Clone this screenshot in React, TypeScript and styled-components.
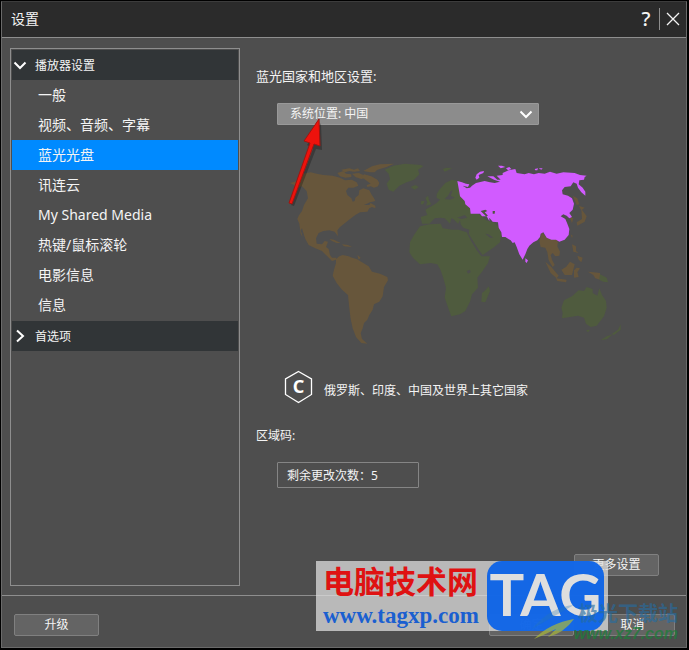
import React, { useState } from "react";
import styled, { createGlobalStyle } from "styled-components";

const GlobalStyle = createGlobalStyle`
  * { box-sizing: border-box; }
  body {
    margin: 0;
    background: #000;
    color: #f4f4f4;
    font-family: "Noto Sans", "Noto Sans CJK SC", sans-serif;
    font-size: 12px;
  }
  button, select { font: inherit; color: inherit; }
`;

const Frame = styled.div`
  min-height: 100vh;
  padding: 1px 2px 2px 1px;
  display: flex;
  background: #000;
`;

const Dialog = styled.div`
  position: relative;
  flex: 1;
  min-width: 0;
  display: flex;
  flex-direction: column;
  border: 1px solid #6a6a6a;
  border-top-color: #3c3c3c;
  background: #4e4e4e;
`;

const TitleBar = styled.header`
  display: flex;
  align-items: center;
  height: 36px;
  padding: 0 0 2px 9px;
  background: #2b2b2b;
  border-bottom: 1px solid #8e8e8e;
`;

const Title = styled.h1`
  flex: 1;
  margin: 0;
  font-size: 14px;
  font-weight: 400;
  line-height: 20px;
`;

const TitleButton = styled.button`
  display: flex;
  align-items: center;
  justify-content: center;
  width: 26px;
  height: 22px;
  padding: 0;
  border: 0;
  background: none;
  font-size: 20px;
  font-weight: 500;
  line-height: 22px;
`;

const TitleDivider = styled.span`
  width: 1px;
  height: 22px;
  background: #8e8e8e;
`;

const Main = styled.main`
  flex: 1;
  display: flex;
  padding: 10px 27px 9px 8px;
  gap: 16px;
`;

const Sidebar = styled.nav`
  flex: 0 0 230px;
  padding: 1px;
  border: 1px solid #8e8e8e;
`;

const GroupButton = styled.button`
  display: flex;
  align-items: center;
  gap: 8px;
  width: 100%;
  height: 30px;
  padding: 0 0 0 1px;
  border: 0;
  background: #313537;
  text-align: left;
`;

const ItemButton = styled.button<{ $active: boolean }>`
  display: block;
  width: 100%;
  height: 30px;
  padding: 0 26px;
  border: 0;
  background: ${(p) => (p.$active ? "#008aff" : "transparent")};
  font-size: 14px;
  line-height: 30px;
  text-align: left;
`;

const Items = styled.div`
  padding-bottom: 1px;
`;

const Content = styled.section`
  flex: 1;
  min-width: 0;
  display: flex;
  flex-direction: column;
`;

const Heading = styled.label`
  display: block;
  padding-top: 18px;
  font-size: 13px;
  line-height: 20px;
`;

const Indent = styled.div`
  padding-left: 21px;
`;

const SelectWrap = styled.div`
  position: relative;
  width: 262px;
  margin-top: 17px;
`;

const RegionSelect = styled.select`
  display: block;
  appearance: none;
  width: 100%;
  height: 22px;
  padding: 0 30px 0 12px;
  border: 1px solid #999;
  border-radius: 1px;
  background: #8c8c8c;
  line-height: 20px;
`;

const SelectArrow = styled.span`
  position: absolute;
  right: 6px;
  top: 4px;
  display: flex;
  pointer-events: none;
`;

const MapSvg = styled.svg`
  display: block;
  width: 350px;
  height: 200px;
  margin: 30px 0 0 34px;
`;

const Legend = styled.div`
  display: flex;
  align-items: center;
  gap: 11px;
  margin: 15px 0 0 28px;
`;

const Hexagon = styled.svg`
  flex: none;
  width: 29px;
  height: 34px;
`;

const LegendText = styled.span`
  padding-top: 8px;
  line-height: 20px;
  white-space: nowrap;
`;

const CodeHeading = styled.h2`
  margin: 22px 0 0;
  font-size: 12px;
  font-weight: 400;
  line-height: 20px;
`;

const Remaining = styled.output`
  display: block;
  width: 142px;
  height: 26px;
  margin-top: 16px;
  padding: 0 9px;
  border: 1px solid #858585;
  border-radius: 1px;
  line-height: 26px;
`;

const Actions = styled.div`
  display: flex;
  justify-content: flex-end;
  margin-top: auto;
  padding-bottom: 10px;
`;

const PushButton = styled.button`
  width: 85px;
  height: 22px;
  padding: 0;
  border: 1px solid #808080;
  border-radius: 2px;
  background: #646464;
  line-height: 20px;
`;

const Footer = styled.footer`
  display: flex;
  gap: 16px;
  padding: 18px 11px 11px 12px;
  border-top: 1px solid #8e8e8e;
`;

const Spacer = styled.span`
  flex: 1;
`;

const Arrow = styled.svg`
  position: absolute;
  left: 278px;
  top: 110px;
  width: 50px;
  height: 100px;
  pointer-events: none;
`;

const SiteMark = styled.div`
  position: absolute;
  right: 78px;
  bottom: 16px;
  display: flex;
  width: 292px;
  height: 70px;
  background: rgba(222, 222, 222, 0.74);
  pointer-events: none;
`;

const SiteText = styled.div`
  width: 171px;
  padding-left: 7px;
  white-space: nowrap;
`;

const SiteName = styled.div`
  height: 40px;
  color: #df1212;
  font: 700 31px/38px "Noto Sans CJK SC", sans-serif;
`;

const SiteUrl = styled.div`
  color: #1a5fd0;
  font: 700 23px/30px "Liberation Serif", serif;
`;

const Tag = styled.div`
  width: 117px;
  height: 70px;
  border-radius: 15px;
  background: rgba(8, 97, 232, 0.93);
  color: #dedede;
  font: 700 58px/66px Lato, "Open Sans", sans-serif;
  text-align: center;
`;

const DownloadMark = styled.div`
  position: absolute;
  right: 8px;
  bottom: 4px;
  display: flex;
  align-items: flex-end;
  pointer-events: none;
`;

const Swoosh = styled.svg`
  width: 48px;
  height: 40px;
`;

const DownloadText = styled.div`
  width: 104px;
  display: flex;
  flex-direction: column;
  align-items: flex-end;
  white-space: nowrap;
`;

const DownloadName = styled.div`
  color: rgba(38, 108, 160, 0.65);
  font: 700 20px/24px "Noto Sans CJK SC", sans-serif;
`;

const DownloadUrl = styled.div`
  color: rgba(30, 125, 58, 0.75);
  font: italic 700 16px/18px "Liberation Sans", sans-serif;
`;

const Chevron = ({ right = false }: { right?: boolean }) => (
  <svg width="14" height="14" viewBox="0 0 14 14" fill="none" stroke="#fff" strokeWidth="2" aria-hidden="true">
    <path d={right ? "M4 1.5 L10 7 L4 12.5" : "M1.5 4.5 L7 10 L12.5 4.5"} />
  </svg>
);

const ITEMS = ["一般", "视频、音频、字幕", "蓝光光盘", "讯连云", "My Shared Media", "热键/鼠标滚轮", "电影信息", "信息"];

const AMERICAS = [
  "M0 84 L22 78 L38 58 L50 54 L62 52 L80 56 L100 60 L128 62 L150 68 L165 76 L185 74 L200 82 L205 92 L190 98 L175 98 L168 108 L172 120 L184 130 L188 140 L194 138 L196 128 L206 120 L208 106 L220 100 L238 106 L244 118 L252 130 L256 138 L240 142 L222 150 L238 150 L242 144 L256 152 L256 160 L246 156 L238 160 L232 170 L210 172 L196 180 L180 192 L165 204 L150 216 L142 226 L144 244 L134 230 L118 226 L100 228 L86 234 L78 250 L80 266 L96 268 L104 258 L114 260 L108 276 L116 282 L120 300 L126 308 L138 308 L138 314 L126 318 L112 304 L96 288 L76 280 L56 270 L46 252 L42 240 L36 220 L32 226 L38 246 L32 236 L28 206 L22 192 L26 182 L36 168 L42 150 L54 130 L50 108 L36 94 L20 98 L12 90 Z",
  "M142 54 L160 48 L168 56 L184 58 L184 66 L166 68 L150 64 Z",
  "M154 44 L178 40 L192 44 L204 40 L210 48 L192 50 L178 48 L164 52 Z",
  "M186 56 L206 54 L220 60 L226 68 L214 72 L196 66 Z",
  "M222 58 L244 64 L262 74 L268 84 L264 94 L252 98 L242 94 L232 96 L230 90 L242 86 L226 74 L214 66 Z",
  "M220 48 L246 34 L270 28 L312 26 L290 36 L262 44 L254 52 L240 52 Z",
  "M118 252 L132 254 L152 264 L140 264 L126 258 Z M156 268 L174 270 L186 276 L162 274 Z M202 300 L212 308 L206 314 Z",
  "M138 312 L148 304 L158 300 L176 304 L186 308 L200 312 L216 322 L236 334 L246 350 L270 356 L292 366 L294 376 L282 396 L278 424 L268 440 L252 448 L248 464 L238 480 L232 494 L222 504 L218 520 L212 534 L216 552 L232 566 L214 564 L198 546 L188 520 L182 492 L178 460 L174 420 L156 404 L140 384 L128 362 L132 344 L138 324 Z",
];

const GREENLAND = "M284 44 L310 32 L345 26 L392 30 L400 34 L384 44 L388 58 L372 74 L350 82 L328 92 L310 110 L296 104 L290 86 L300 72 L296 56 Z M362 96 L376 90 L386 96 L374 104 Z M458 42 L470 38 L486 40 L474 46 L464 50 Z";

const EUROPE_AFRICA = [
  "M110 118 L118 104 L136 84 L156 74 L172 78 L176 98 L186 124 L196 144 L212 156 L216 172 L236 178 L246 184 L258 196 L284 204 L296 216 L304 240 L300 262 L280 278 L262 290 L248 300 L236 284 L218 256 L206 236 L208 224 L190 218 L182 208 L180 196 L174 206 L160 192 L154 190 L150 206 L134 190 L120 188 L104 190 L88 206 L66 206 L62 186 L82 180 L76 164 L94 154 L110 144 L120 134 L110 128 Z",
  "M76 130 L84 122 L88 138 L94 148 L78 152 L82 142 Z M64 138 L74 138 L70 148 L62 148 Z",
  "M60 214 L88 208 L122 206 L128 220 L158 224 L176 224 L200 232 L212 256 L230 286 L244 304 L270 304 L264 324 L246 350 L232 368 L234 398 L216 418 L210 440 L196 468 L180 478 L154 484 L148 468 L134 428 L138 398 L130 370 L122 346 L112 328 L92 324 L60 328 L40 310 L28 292 L30 262 L42 240 Z",
  "M266 394 L270 408 L256 442 L244 440 L246 414 L256 406 Z",
];

const INNER_SEAS = "M134 132 L144 122 L152 108 L158 106 L152 122 L164 128 L150 134 Z M172 188 L194 180 L202 188 L186 192 Z M256 236 L266 238 L280 248 L270 248 Z M200 348 L210 344 L212 352 L204 356 Z";

const ASIA = "M22 78 L36 82 L48 86 L58 88 L54 96 L38 92 L50 100 L60 98 L66 92 L78 84 L104 78 L120 82 L134 84 L150 80 L132 74 L112 64 L130 64 L142 74 L152 74 L140 62 L158 60 L158 54 L176 46 L196 42 L200 54 L224 58 L236 54 L252 58 L266 54 L284 56 L300 50 L320 56 L340 52 L374 54 L390 60 L410 62 L404 66 L402 74 L388 76 L386 88 L398 98 L406 110 L406 122 L394 112 L384 98 L380 86 L370 82 L362 94 L344 96 L336 106 L338 118 L354 122 L366 130 L372 146 L368 164 L358 174 L366 186 L358 190 L350 182 L340 178 L332 184 L346 192 L352 206 L358 222 L356 240 L344 254 L328 260 L318 254 L304 254 L290 248 L280 232 L272 236 L270 246 L262 256 L250 262 L238 272 L232 282 L226 298 L218 314 L208 298 L200 276 L194 262 L188 264 L182 256 L166 246 L156 246 L154 232 L146 218 L144 202 L128 200 L118 188 L118 198 L110 184 L96 184 L90 176 L62 176 L60 160 L46 148 L44 138 L30 124 L28 112 Z";
const ASIA_ISLANDS = "M76 68 L80 58 L90 50 L102 48 L100 54 L86 60 L88 68 L80 74 Z M144 32 L156 32 L166 36 L152 40 Z M168 40 L178 36 L184 42 L174 46 Z M254 42 L264 40 L262 46 L256 46 Z M266 40 L278 40 L274 44 Z M226 310 L234 316 L230 324 L226 320 Z";
const SOUTHEAST = "M276 232 L290 248 L304 254 L318 252 L324 262 L322 274 L330 290 L328 302 L316 304 L308 294 L302 300 L306 314 L314 330 L308 336 L296 316 L292 292 L286 278 L272 276 L268 258 Z M286 320 L304 336 L326 362 L320 370 L302 354 Z M318 370 L350 374 L348 382 L322 378 Z M334 344 L348 336 L360 320 L374 328 L366 360 L344 360 Z M372 346 L380 338 L390 340 L382 352 L386 366 L372 368 Z M366 268 L378 274 L378 288 L386 294 L370 290 Z M382 302 L398 308 L394 322 L386 314 Z M386 152 L404 158 L394 166 Z M394 162 L410 184 L404 200 L382 212 L380 202 L396 192 Z M358 186 L370 190 L366 204 Z M368 122 L382 130 L388 148 L380 150 Z M362 238 L368 242 L366 250 Z M414 350 L430 352 L450 354 L450 374 L436 370 L430 360 Z";
const OCEANIA = "M450 358 L470 368 L474 382 L460 380 L448 374 Z M334 458 L342 436 L366 424 L386 406 L402 408 L410 396 L428 402 L428 414 L442 422 L448 400 L456 420 L468 438 L470 458 L462 484 L440 512 L422 516 L408 506 L402 488 L384 482 L360 486 L336 490 L338 474 Z M408 526 L420 524 L414 532 Z M512 508 L512 524 L492 540 L486 536 L504 524 Z M488 538 L472 552 L452 556 L470 544 Z";

function WorldMap() {
  const brown = "#67563b";
  const green = "#4f5b3e";
  return (
    <MapSvg viewBox="0 0 1050 600" role="img" aria-label="世界地图">
      <g fill={brown}>
        {AMERICAS.map((d) => <path key={d} d={d} />)}
      </g>
      <path fill={green} d={GREENLAND} />
      <g transform="translate(330 0)">
        {EUROPE_AFRICA.map((d) => <path key={d} fill={green} d={d} />)}
        <path fill="#4e4e4e" d={INNER_SEAS} />
      </g>
      <g transform="translate(480 0)">
        <path fill={brown} d={SOUTHEAST} />
        <path fill={green} d={OCEANIA} />
        <path fill="#d15bff" d={ASIA + ASIA_ISLANDS} />
        <path fill="#4e5540" d="M92 168 L106 164 L112 168 L104 172 L114 182 L108 184 Z M128 168 L135 168 L134 176 L128 176 Z" />
      </g>
    </MapSvg>
  );
}

export default function App() {
  const [active, setActive] = useState(2);
  const [open, setOpen] = useState(true);
  return (
    <>
      <GlobalStyle />
      <Frame>
        <Dialog>
          <TitleBar>
            <Title>设置</Title>
            <TitleButton aria-label="帮助">?</TitleButton>
            <TitleDivider />
            <TitleButton aria-label="关闭">
              <svg width="14" height="14" viewBox="0 0 14 14" stroke="#f4f4f4" strokeWidth="1.3" aria-hidden="true">
                <path d="M1 1 L13 13 M13 1 L1 13" />
              </svg>
            </TitleButton>
          </TitleBar>
          <Main>
            <Sidebar>
              <GroupButton aria-expanded={open} onClick={() => setOpen(!open)}>
                <Chevron right={!open} />
                播放器设置
              </GroupButton>
              {open && (
                <Items>
                  {ITEMS.map((label, i) => (
                    <ItemButton key={label} $active={i === active} onClick={() => setActive(i)}>
                      {label}
                    </ItemButton>
                  ))}
                </Items>
              )}
              <GroupButton aria-expanded={false}>
                <Chevron right />
                首选项
              </GroupButton>
            </Sidebar>
            <Content>
              <Heading htmlFor="region">蓝光国家和地区设置:</Heading>
              <Indent>
                <SelectWrap>
                  <RegionSelect id="region" defaultValue="cn">
                    <option value="cn">系统位置: 中国</option>
                  </RegionSelect>
                  <SelectArrow><Chevron /></SelectArrow>
                </SelectWrap>
              </Indent>
              <WorldMap />
              <Legend>
                <Hexagon viewBox="0 0 29 34" aria-label="C">
                  <path d="M14.5 1.5 L27.5 9 V24.5 L14.5 32.5 L1.5 24.5 V9 Z" fill="none" stroke="#fff" strokeWidth="1.3" />
                  <text x="14.5" y="23" textAnchor="middle" fill="#fff" fontFamily="Noto Sans" fontSize="18" fontWeight="700">C</text>
                </Hexagon>
                <LegendText>俄罗斯、印度、中国及世界上其它国家</LegendText>
              </Legend>
              <CodeHeading>区域码:</CodeHeading>
              <Indent>
                <Remaining>剩余更改次数：5</Remaining>
              </Indent>
              <Actions>
                <PushButton>更多设置</PushButton>
              </Actions>
            </Content>
          </Main>
          <Footer>
            <PushButton>升级</PushButton>
            <Spacer />
            <PushButton>确定</PushButton>
            <PushButton>取消</PushButton>
          </Footer>
          <Arrow viewBox="0 0 50 100" aria-hidden="true">
            <path d="M11 93 L33 37 L27 33 L41 11 L42 38 L36 37 L14 94 Z" fill="#000" opacity="0.25" />
            <path d="M9 91 L30 31 L24 29 L39 7 L40 34 L34 32 L12 92 Z" fill="#ee120c" stroke="#a01510" strokeWidth="1" />
          </Arrow>
          <SiteMark>
            <SiteText>
              <SiteName>电脑技术网</SiteName>
              <SiteUrl>www.tagxp.com</SiteUrl>
            </SiteText>
            <Tag>TAG</Tag>
          </SiteMark>
          <DownloadMark aria-hidden="true">
            <Swoosh viewBox="0 0 48 40">
              <path d="M8 36 Q24 20 48 16 Q38 30 22 34 L30 26 Q18 32 8 36 Z" fill="#a9b83a" opacity=".7" />
              <path d="M6 26 Q24 4 48 2 Q30 12 6 26 Z" fill="#2777b0" opacity=".3" />
            </Swoosh>
            <DownloadText>
              <DownloadName>极光下载站</DownloadName>
              <DownloadUrl>www.xz7.com</DownloadUrl>
            </DownloadText>
          </DownloadMark>
        </Dialog>
      </Frame>
    </>
  );
}
